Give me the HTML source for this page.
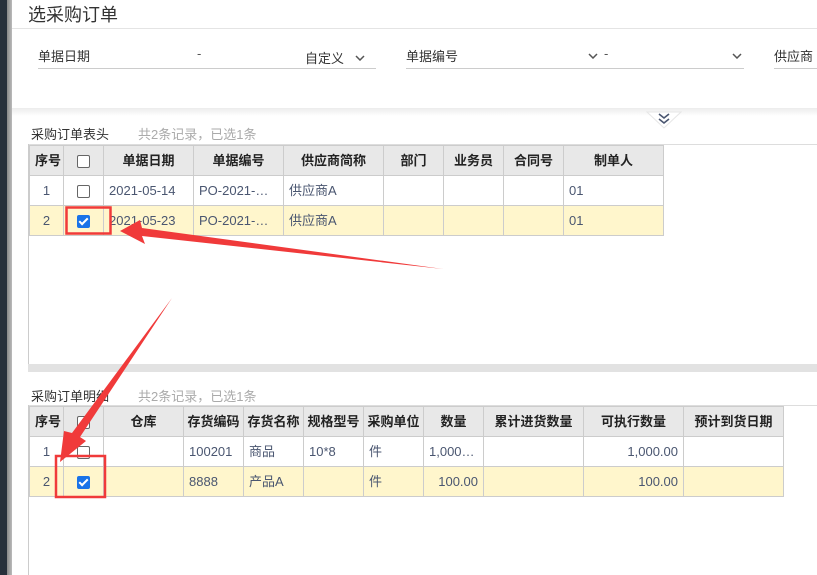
<!DOCTYPE html>
<html><head><meta charset="utf-8"><style>
*{margin:0;padding:0;box-sizing:border-box}
body{width:817px;height:575px;overflow:hidden;background:#fff;font-family:"Liberation Sans","Noto Sans CJK SC",sans-serif;position:relative;font-size:13px;color:#333}
.a{position:absolute}
table{border-collapse:collapse;position:absolute;table-layout:fixed}
td,th{border:1px solid #ccc;height:30px;line-height:27px;font-size:13px;white-space:nowrap;overflow:hidden;padding:0 5px}
th{background:#e8e8e8;font-weight:bold;color:#222;text-align:center}
td{color:#4a5670}
tr.y td{background:#fff6cc}
.c{text-align:center}.r{text-align:right}
.cb{display:inline-block;width:13px;height:13px;border:1px solid #666;border-radius:2px;vertical-align:middle;background:#fff}
.cbk{display:inline-block;width:13px;height:13px;border-radius:2px;background:#1a73e8;vertical-align:middle;position:relative}
.cbk:after{content:"";position:absolute;left:4px;top:1px;width:3px;height:7px;border:solid #fff;border-width:0 2px 2px 0;transform:rotate(45deg)}
.lbl{font-size:13px;color:#333}
.g{color:#aaa;font-size:13px}
.ch{position:absolute;width:10px;height:6px}
</style></head><body>
<div class="a" style="left:0;top:0;width:7px;height:575px;background:#27303b"></div>
<div class="a" style="left:7px;top:0;width:5px;height:575px;background:linear-gradient(90deg,#888,#bbb)"></div>
<div class="a" style="left:28px;top:1px;font-size:18px;color:#333">选采购订单</div>
<div class="a" style="left:12px;top:28px;width:805px;height:1px;background:#e4e4e4"></div>
<div class="a lbl" style="left:38px;top:46px">单据日期</div>
<div class="a" style="left:197px;top:46px;color:#555">-</div>
<div class="a lbl" style="left:305px;top:48px">自定义</div>
<svg class="ch" style="left:355px;top:55px" viewBox="0 0 10 6"><path d="M1 1l4 4 4-4" stroke="#555" stroke-width="1.5" fill="none"/></svg>
<div class="a" style="left:38px;top:68px;width:338px;height:1px;background:#ccc"></div>
<div class="a lbl" style="left:406px;top:46px">单据编号</div>
<svg class="ch" style="left:588px;top:53px" viewBox="0 0 10 6"><path d="M1 1l4 4 4-4" stroke="#555" stroke-width="1.5" fill="none"/></svg>
<div class="a" style="left:604px;top:46px;color:#555">-</div>
<svg class="ch" style="left:732px;top:53px" viewBox="0 0 10 6"><path d="M1 1l4 4 4-4" stroke="#555" stroke-width="1.5" fill="none"/></svg>
<div class="a" style="left:406px;top:68px;width:338px;height:1px;background:#ccc"></div>
<div class="a lbl" style="left:774px;top:46px">供应商</div>
<div class="a" style="left:774px;top:68px;width:43px;height:1px;background:#ccc"></div>
<div class="a" style="left:12px;top:108px;width:805px;height:8px;background:linear-gradient(#ececec,#fff)"></div>
<svg class="a" style="left:645px;top:110px" width="38" height="20"><polygon points="2,2 36,2 19,18" fill="#fff" stroke="#e6e6e6"/><path d="M14 4l5 4 5-4M14 9l5 4 5-4" stroke="#4a5670" stroke-width="1.6" fill="none"/></svg>

<div class="a lbl" style="left:31px;top:124px">采购订单表头</div>
<div class="a g" style="left:138px;top:124px">共2条记录，已选1条</div>
<div class="a" style="left:28px;top:144px;width:789px;height:1px;background:#ddd"></div>
<div class="a" style="left:28px;top:144px;width:1px;height:221px;background:#ccc"></div>
<div class="a" style="left:28px;top:364px;width:789px;height:8px;background:#e2e2e2"></div>
<table style="left:29px;top:145px;width:635px">
<colgroup><col style="width:34px"><col style="width:40px"><col style="width:90px"><col style="width:90px"><col style="width:100px"><col style="width:60px"><col style="width:60px"><col style="width:60px"><col style="width:100px"></colgroup>
<tr><th>序号</th><th><span class="cb"></span></th><th>单据日期</th><th>单据编号</th><th>供应商简称</th><th>部门</th><th>业务员</th><th>合同号</th><th>制单人</th></tr>
<tr><td class="c">1</td><td class="c"><span class="cb"></span></td><td>2021-05-14</td><td>PO-2021-…</td><td>供应商A</td><td></td><td></td><td></td><td>01</td></tr>
<tr class="y"><td class="c">2</td><td class="c"><span class="cbk"></span></td><td>2021-05-23</td><td>PO-2021-…</td><td>供应商A</td><td></td><td></td><td></td><td>01</td></tr>
</table>

<div class="a lbl" style="left:31px;top:386px">采购订单明细</div>
<div class="a g" style="left:138px;top:386px">共2条记录，已选1条</div>
<div class="a" style="left:28px;top:405px;width:789px;height:1px;background:#ddd"></div>
<div class="a" style="left:28px;top:405px;width:1px;height:170px;background:#ccc"></div>
<table style="left:29px;top:406px;width:755px">
<colgroup><col style="width:34px"><col style="width:40px"><col style="width:80px"><col style="width:60px"><col style="width:60px"><col style="width:60px"><col style="width:60px"><col style="width:60px"><col style="width:100px"><col style="width:100px"><col style="width:100px"></colgroup>
<tr><th>序号</th><th><span class="cb"></span></th><th>仓库</th><th style="padding:0 2px">存货编码</th><th style="padding:0 2px">存货名称</th><th style="padding:0 2px">规格型号</th><th style="padding:0 2px">采购单位</th><th>数量</th><th>累计进货数量</th><th>可执行数量</th><th>预计到货日期</th></tr>
<tr><td class="c">1</td><td class="c"><span class="cb"></span></td><td></td><td>100201</td><td>商品</td><td>10*8</td><td>件</td><td>1,000…</td><td></td><td class="r">1,000.00</td><td></td></tr>
<tr class="y"><td class="c">2</td><td class="c"><span class="cbk"></span></td><td></td><td>8888</td><td>产品A</td><td></td><td>件</td><td class="r">100.00</td><td></td><td class="r">100.00</td><td></td></tr>
</table>

<svg class="a" style="left:0;top:0" width="817" height="575">
<rect x="66.5" y="207.5" width="44" height="26" fill="none" stroke="#f03a3a" stroke-width="2.5"/>
<rect x="56" y="456" width="49" height="41" fill="none" stroke="#f03a3a" stroke-width="2.5"/>
<polygon points="443,269 142,236 145,244 120,231 140,220 142,228" fill="#f03a3a"/>
<polygon points="172,298 80,437 86,441 60,462 64,431 72,433" fill="#f03a3a"/>
</svg>
</body></html>
